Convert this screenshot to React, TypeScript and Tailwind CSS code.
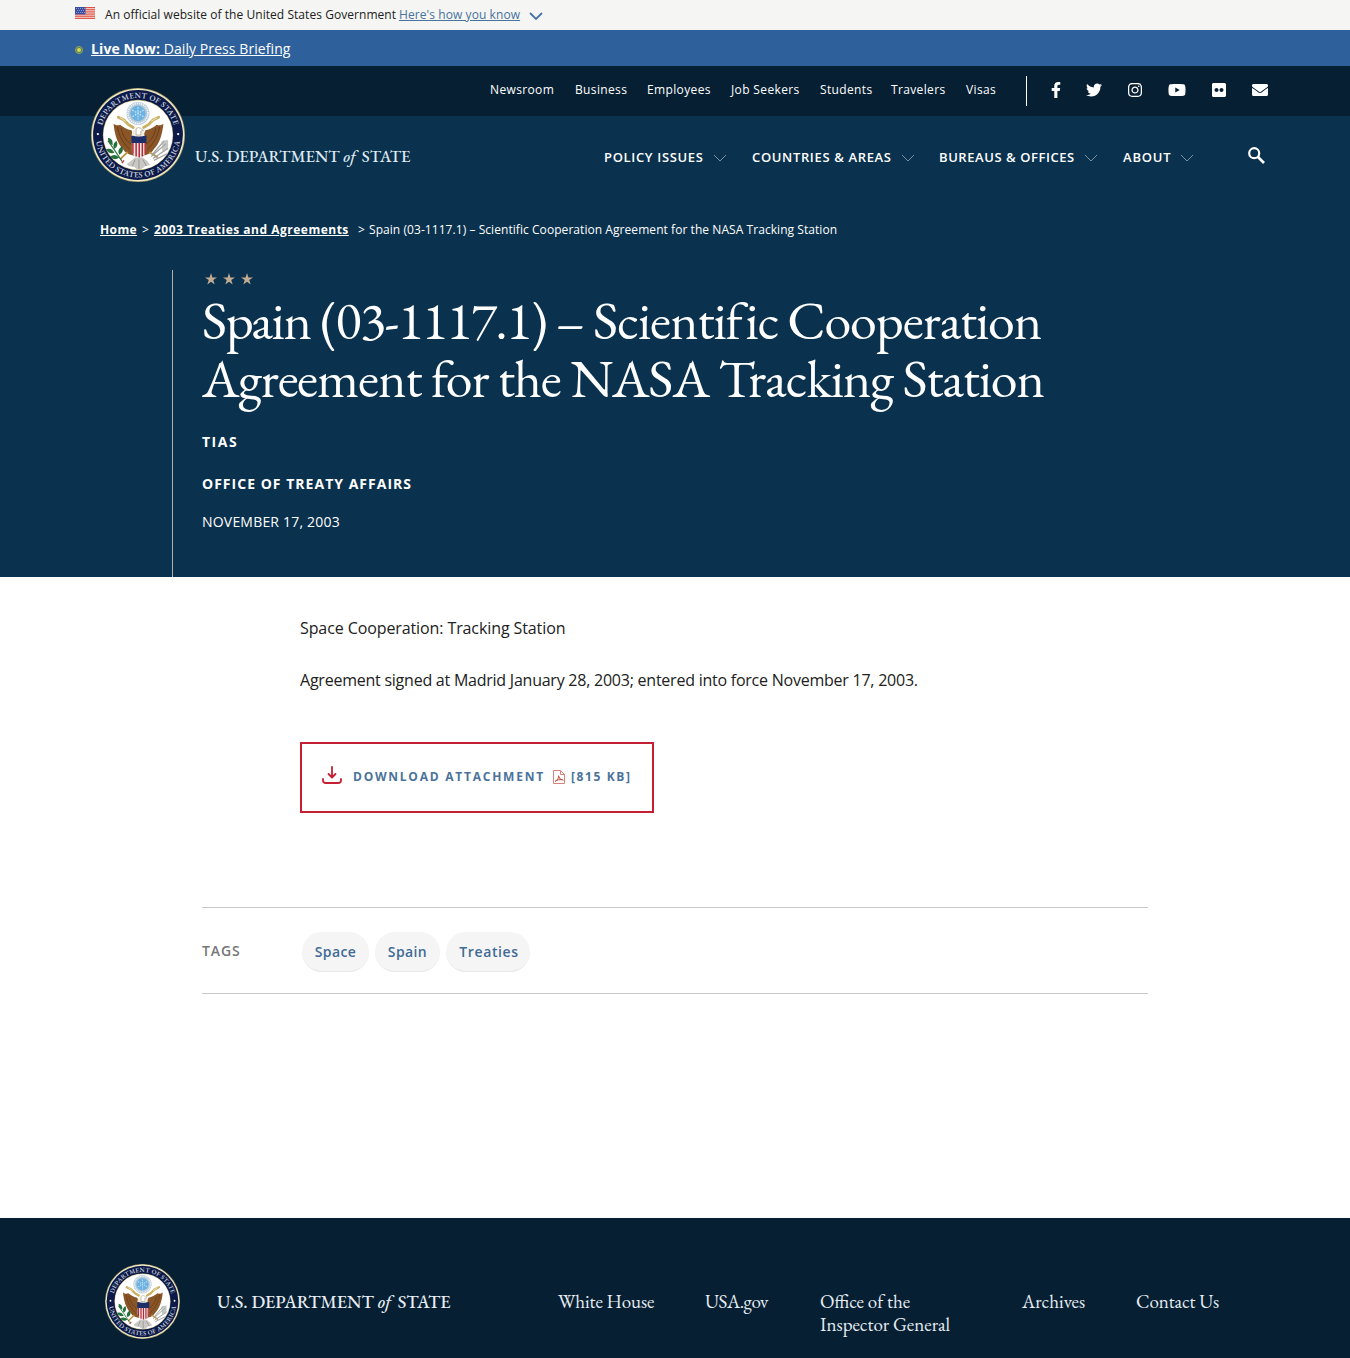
import { FaEnvelope, FaFacebookF, FaFlickr, FaInstagram, FaTwitter, FaYoutube } from "react-icons/fa";

const utilityLinks = [
  { label: "Newsroom", width: "w-[85px]" },
  { label: "Business", width: "w-[72px]" },
  { label: "Employees", width: "w-[84px]" },
  { label: "Job Seekers", width: "w-[89px]" },
  { label: "Students", width: "w-[71px]" },
  { label: "Travelers", width: "w-[75px]" },
  { label: "Visas", width: "w-[60px]" },
];

const mainLinks = [
  { label: "POLICY ISSUES", width: "w-[148px]", tracking: "tracking-[0.67px]" },
  { label: "COUNTRIES & AREAS", width: "w-[187px]", tracking: "tracking-[0.65px]" },
  { label: "BUREAUS & OFFICES", width: "w-[184px]", tracking: "tracking-[0.56px]" },
  { label: "ABOUT", width: "w-[125px]", tracking: "tracking-[0.8px]" },
];

const footerLinks = [
  { label: "White House", width: "w-[147px] tracking-[-0.1px]" },
  { label: "USA.gov", width: "w-[115px] tracking-[-0.450px]" },
  { label: "Office of the Inspector General", width: "w-[202px] pr-[50px]" },
  { label: "Archives", width: "w-[114px]" },
  { label: "Contact Us", width: "w-[100px] tracking-[-0.1px]" },
];

const stripes = [0, 1, 2, 3, 4, 5, 6];

function Seal({ id, className }: { id: string; className: string }) {
  return (
    <svg viewBox="0 0 100 100" className={className} aria-label="Department of State seal">
      <defs>
        <path id={`${id}-top`} d="M10.600 50a39.400 39.400 0 0 1 78.800 0" />
        <path id={`${id}-bottom`} d="M4.800 50a45.200 45.200 0 0 0 90.400 0" />
      </defs>
      <circle cx="50" cy="50" r="50" fill="#a9a06a" />
      <circle cx="50" cy="50" r="49.200" fill="#f3eccb" />
      <circle cx="50" cy="50" r="47.800" fill="#0b1a48" />
      <circle cx="50" cy="50" r="37.400" fill="#c5b87c" />
      <circle cx="50" cy="50" r="36.800" fill="#fff" />
      <g fill="#c3cadb" className="font-['EB_Garamond','Liberation_Serif',serif]" fontSize="8.600" fontWeight="600">
        <text textAnchor="middle" textLength="103">
          <textPath href={`#${id}-top`} startOffset="50%" textLength="103">DEPARTMENT OF STATE</textPath>
        </text>
        <text textAnchor="middle" textLength="128">
          <textPath href={`#${id}-bottom`} startOffset="50%" textLength="128">UNITED STATES OF AMERICA</textPath>
        </text>
      </g>
      <circle cx="7.300" cy="49" r="1.200" fill="#fff" />
      <circle cx="92.700" cy="49" r="1.200" fill="#fff" />
      {/* glory above the head */}
      <circle cx="50" cy="27" r="12.200" fill="#b5c9d8" />
      <circle cx="50" cy="27" r="10.600" fill="none" stroke="#edf4f9" strokeWidth="1.800" strokeDasharray="1.500 .8" />
      <circle cx="50" cy="27" r="8" fill="#6cb2e0" />
      <path d="M50 20.500v13M44 23.500l12 7M56 23.500l-12 7" stroke="#c0e2f7" strokeWidth="1.400" strokeDasharray="1.700 1.300" />
      {/* eagle wings and body */}
      <path d="M24 38c3 2 5 2 7 1 4 3 7 5 12 6l3 7v20c-6-1-10-3-12-7-6-6-9-16-10-27z" fill="#8a5527" />
      <path d="M77 38c-3 2-5 2-7 1-4 3-7 5-12 6l-3 7v20c6-1 10-3 12-7 6-6 9-16 10-27z" fill="#8a5527" />
      <path d="M28 41c2 10 6 18 13 24M32 43c2 8 5 13 11 17M73 41c-2 10-6 18-13 24M69 43c-2 8-5 13-11 17" fill="none" stroke="#633914" strokeWidth=".9" />
      <path d="M29 31l6 3 5 5 5 3M72 31l-6 3-5 5-5 3" fill="none" stroke="#c9b063" strokeWidth="3" strokeLinecap="round" />
      <path d="M31 31.500l6 4M70 31.500l-6 4" stroke="#f5e9b6" strokeWidth="1" />
      <path d="M44 46q6-5 12 0l1 5h-14z" fill="#f1ede2" />
      <path d="M48 43q3-2 5 0l3 2-3 1v4h-5z" fill="#fff" stroke="#9b8b69" strokeWidth=".6" />
      {/* tail and talons */}
      <path d="M42 78l5-4h8l5 4 3 4-5 1-4 3-4 1-4-3-6-1-2-2z" fill="#c9c8c4" />
      <path d="M47 76l-3 7M51 76v10M55 76l4 7" stroke="#858782" strokeWidth=".8" />
      <path d="M39 68l-8 8M62 68l9 6" stroke="#bd9240" strokeWidth="2" />
      {/* shield */}
      <path d="M43.500 57h15v9c0 5-4 7-7.500 8.500-3.500-1.500-7.500-3.500-7.500-8.500z" fill="#f4e9e9" />
      <path d="M44.600 57v13M48 57v16M51.300 57v17M54.600 57v16M57.600 57v13" stroke="#b32734" strokeWidth="1.600" />
      <path d="M43 50.500q8 2 16 0v8H43z" fill="#1c2f68" />
      {/* olive branch */}
      <path d="M18 56c5 7 9 13 15 22" stroke="#32733f" strokeWidth="1.200" fill="none" />
      <path d="M18 53q6 1 5 8-5-2-5-8zM27 56q3 5-2 9-3-5 2-9zM16 65q6-2 9 4-6 2-9-4zM33 62q3 6-3 9-3-5 3-9zM20 73q6-4 10 1-5 4-10-1z" fill="#23703a" />
      <path d="M33 80l2-3" stroke="#b33" strokeWidth="1.500" />
      {/* arrows */}
      <path d="M64 73l16-14M66 75l16-11M65 71l13-15M67 77l14-7" stroke="#a1a29d" strokeWidth="1.300" />
      <path d="M75 57l7-2v10l-6 3z" fill="#aeb0ad" opacity=".7" />
    </svg>
  );
}

function Chevron({ className }: { className: string }) {
  return (
    <svg viewBox="0 0 14 8" className={className} fill="none" stroke="currentColor">
      <path d="M1 1l6 6 6-6" />
    </svg>
  );
}

function Flag() {
  return (
    <svg viewBox="0 0 20 12" className="h-3 w-5">
      <rect width="20" height="12" fill="#f6dcd8" />
      {stripes.map((i) => (
        <rect key={i} y={i * 1.85} width="20" height="0.95" fill="#dc4a3c" />
      ))}
      <rect width="10.500" height="7.400" fill="#3c4fa3" />
      <path d="M1 1.500h9M2 3.500h8M1 5.500h9" stroke="#a9b4e0" strokeWidth=".8" strokeDasharray=".9 1.100" />
    </svg>
  );
}

function Wordmark({ className }: { className: string }) {
  return (
    <span className={`whitespace-nowrap font-['EB_Garamond','Liberation_Serif',serif] font-medium leading-6 ${className}`}>
      U.S. DEPARTMENT <i className="mr-[2.500px]">of</i> STATE
    </span>
  );
}

function Star() {
  return (
    <svg viewBox="0 0 24 24" className="size-3 fill-[#c3ac94]">
      <path d="M12 0l2.800 8.900 9.200-.1-7.500 5.300 2.900 9.100L12 17.600l-7.400 5.600 2.900-9.100L0 8.800l9.200.1z" />
    </svg>
  );
}

export default function App() {
  return (
    <div className="flex h-[1358px] w-[1350px] flex-col overflow-hidden bg-white font-['Open_Sans',sans-serif] text-[#212121]">
      <div className="flex h-[30px] shrink-0 items-center bg-[#f5f5f3] pl-[75px] text-[12px]">
        <div className="-mt-1"><Flag /></div>
        <span className="ml-[10px] w-[294px] whitespace-nowrap tracking-[0.05px]">An official website of the United States Government</span>
        <a className="whitespace-nowrap tracking-[0.08px] text-[#48739d] underline underline-offset-[1px]">Here's how you know</a>
        <Chevron className="mt-[2px] ml-[9px] h-[8px] w-[14px] stroke-[1.8px] text-[#4773aa]" />
      </div>

      <div className="flex h-9 shrink-0 items-center bg-[#2e619b] pl-[75px] text-[14px] text-white">
        <span className="mt-[3px] mr-2 flex size-2 items-center justify-center rounded-full border border-[#9aa552] bg-[#4d7c6b]">
          <span className="size-1 rounded-full bg-[#d9d94a]" />
        </span>
        <a className="whitespace-nowrap tracking-[0.08px] underline underline-offset-[1px]"><b className="tracking-[0.1px]">Live Now:</b> Daily Press Briefing</a>
      </div>

      <header className="relative h-[511px] shrink-0 bg-[#0a314d] text-white">
        <div className="flex h-[50px] bg-[#071f33] pl-[490px] text-[12px]">
          <nav className="flex pt-[15px] leading-[18px]">
            {utilityLinks.map((link) => (
              <a key={link.label} className={`${link.width} whitespace-nowrap tracking-[0.36px]`}>{link.label}</a>
            ))}
          </nav>
          <div className="mt-[10px] h-[30px] w-px bg-white" />
          <div className="flex h-[48px] items-center text-[16px]">
            <FaFacebookF className="ml-[21px] w-4" />
            <FaTwitter className="ml-[22px] w-4" />
            <FaInstagram className="ml-[25px] w-4" />
            <FaYoutube className="ml-[25px] w-[18px]" />
            <FaFlickr className="ml-[25px] w-4" />
            <FaEnvelope className="ml-[25px] w-4" />
          </div>
        </div>
        <div className="absolute top-[22px] left-[91px] flex">
          <Seal id="header-seal" className="size-[94px]" />
          <Wordmark className="mt-[56px] ml-[10px] text-[16.700px] text-[#dfe9f0]" />
        </div>
        <nav className="flex h-[83px] items-center pl-[604px] text-[13px] font-semibold">
          {mainLinks.map((link) => (
            <a key={link.label} className={`${link.width} ${link.tracking} flex items-center whitespace-nowrap`}>
              {link.label}
              <Chevron className="ml-[9px] h-[8px] w-[14px] text-[#7891a2]" />
            </a>
          ))}
          <svg viewBox="0 0 17 17" className="-mt-[5px] size-[17px]" fill="none" stroke="currentColor" strokeWidth="2.200">
            <circle cx="6.200" cy="6.200" r="5" />
            <path d="M10 10l6 6" strokeWidth="2.600" />
          </svg>
        </nav>

        <div className="mt-[21px] flex h-[20px] items-center pl-[100px] text-[12px] whitespace-nowrap">
          <a className="w-[42px] font-bold tracking-[0.4px] underline underline-offset-[1px]">Home</a>
          <span className="w-3">&gt;</span>
          <a className="w-[204px] font-bold tracking-[0.5px] underline underline-offset-[1px]">2003 Treaties and Agreements</a>
          <span className="w-[11px]">&gt;</span>
          <span className="tracking-[0.06px]">Spain (03-1117.1) – Scientific Cooperation Agreement for the NASA Tracking Station</span>
        </div>

        <div className="mt-[30px] ml-[172px] h-[307px] border-l border-[#b3b0a6] pl-[29px]">
          <div className="flex gap-[6px] pt-[3px] pl-[3px]">
            <Star />
            <Star />
            <Star />
          </div>
          <h1 className="mt-[6px] font-['EB_Garamond','Liberation_Serif',serif] text-[54px] leading-[58px] tracking-[-1.080px] whitespace-nowrap">
            <span className="tracking-[-1.350px]">Spain </span>
            <span className="tracking-[-1.500px]">(03-1117.1) – </span>
            Scientific <span className="-ml-px">Cooperation</span>
            <br />
            Agreement for the NASA Tracking Station
          </h1>
          <p className="mt-[25px] text-[14px] leading-5 font-bold tracking-[1.500px]">TIAS</p>
          <p className="mt-[22px] text-[14px] leading-5 font-bold tracking-[1.020px]">OFFICE OF TREATY AFFAIRS</p>
          <p className="mt-[18px] text-[14px] leading-5 tracking-[0.2px]">NOVEMBER 17, 2003</p>
        </div>
      </header>

      <main className="h-[641px] shrink-0 pt-[38px]">
        <div className="pl-[300px] text-[16px] leading-[26px]">
          <p className="tracking-[-0.1px]">Space Cooperation: Tracking Station</p>
          <p className="mt-[26px] tracking-[-0.236px]">Agreement signed at Madrid January 28, 2003; entered into force November 17, 2003.</p>
          <a className="mt-[49px] flex h-[71px] w-[354px] items-center border-2 border-[#c41f33] pb-[2px] pl-[20px] text-[12px] font-bold whitespace-nowrap text-[#4a739a]">
            <svg viewBox="0 0 20 18" className="-mt-1 h-[18px] w-5" fill="none" stroke="#c41f35" strokeWidth="1.800" strokeLinecap="round" strokeLinejoin="round">
              <path d="M10 1v10M6.500 8l3.500 3.500L13.500 8M1 13v1.500Q1 17 4 17h12q3 0 3-2.500V13" />
            </svg>
            <span className="ml-[11px] w-[200px] tracking-[1.760px]">DOWNLOAD ATTACHMENT</span>
            <svg viewBox="0 0 12 14" className="h-[14px] w-3" fill="none" stroke="#d88379">
              <path d="M.5.5h7l4 4v9H.5zM7.500.5v4h4" />
              <path d="M2 11.500C5 10 6 7 5.500 5.500M5.500 6q1 4 5 4.200M2.500 11q3-2 7-1.300" stroke="#c6503f" />
            </svg>
            <span className="ml-[6px] tracking-[1.600px]">[815 KB]</span>
          </a>
        </div>

        <div className="mx-[202px] mt-[94px] flex h-[87px] w-[946px] items-center border-y border-[#c8c8c8] pt-[2px] text-[14px] font-semibold">
          <span className="-mt-[2px] w-[100px] tracking-[0.900px] text-[#777]">TAGS</span>
          <div className="flex gap-[6px] text-[#416b96]">
            <a className="flex h-[40px] w-[67px] items-center justify-center rounded-[20px] border-b border-[#e8e8e8] bg-[#f5f5f5] tracking-[0.4px]">Space</a>
            <a className="flex h-[40px] w-[65px] items-center justify-center rounded-[20px] border-b border-[#e8e8e8] bg-[#f5f5f5] tracking-[0.4px]">Spain</a>
            <a className="flex h-[40px] w-[84px] items-center justify-center rounded-[20px] border-b border-[#e8e8e8] bg-[#f5f5f5] pl-[2px] tracking-[0.6px]">Treaties</a>
          </div>
        </div>
      </main>

      <footer className="flex h-[140px] shrink-0 bg-[#071f33] pt-[46px] pl-[105px] text-white">
        <Seal id="footer-seal" className="size-[75px] shrink-0" />
        <Wordmark className="mt-[26px] ml-[37px] w-[341px] text-[18.100px] text-[#e6edf2]" />
        <nav className="mt-[26px] flex font-['EB_Garamond','Liberation_Serif',serif] text-[19px] leading-[23px] text-[#e6edf2]">
          {footerLinks.map((link) => (
            <a key={link.label} className={link.width}>{link.label}</a>
          ))}
        </nav>
      </footer>
    </div>
  );
}
